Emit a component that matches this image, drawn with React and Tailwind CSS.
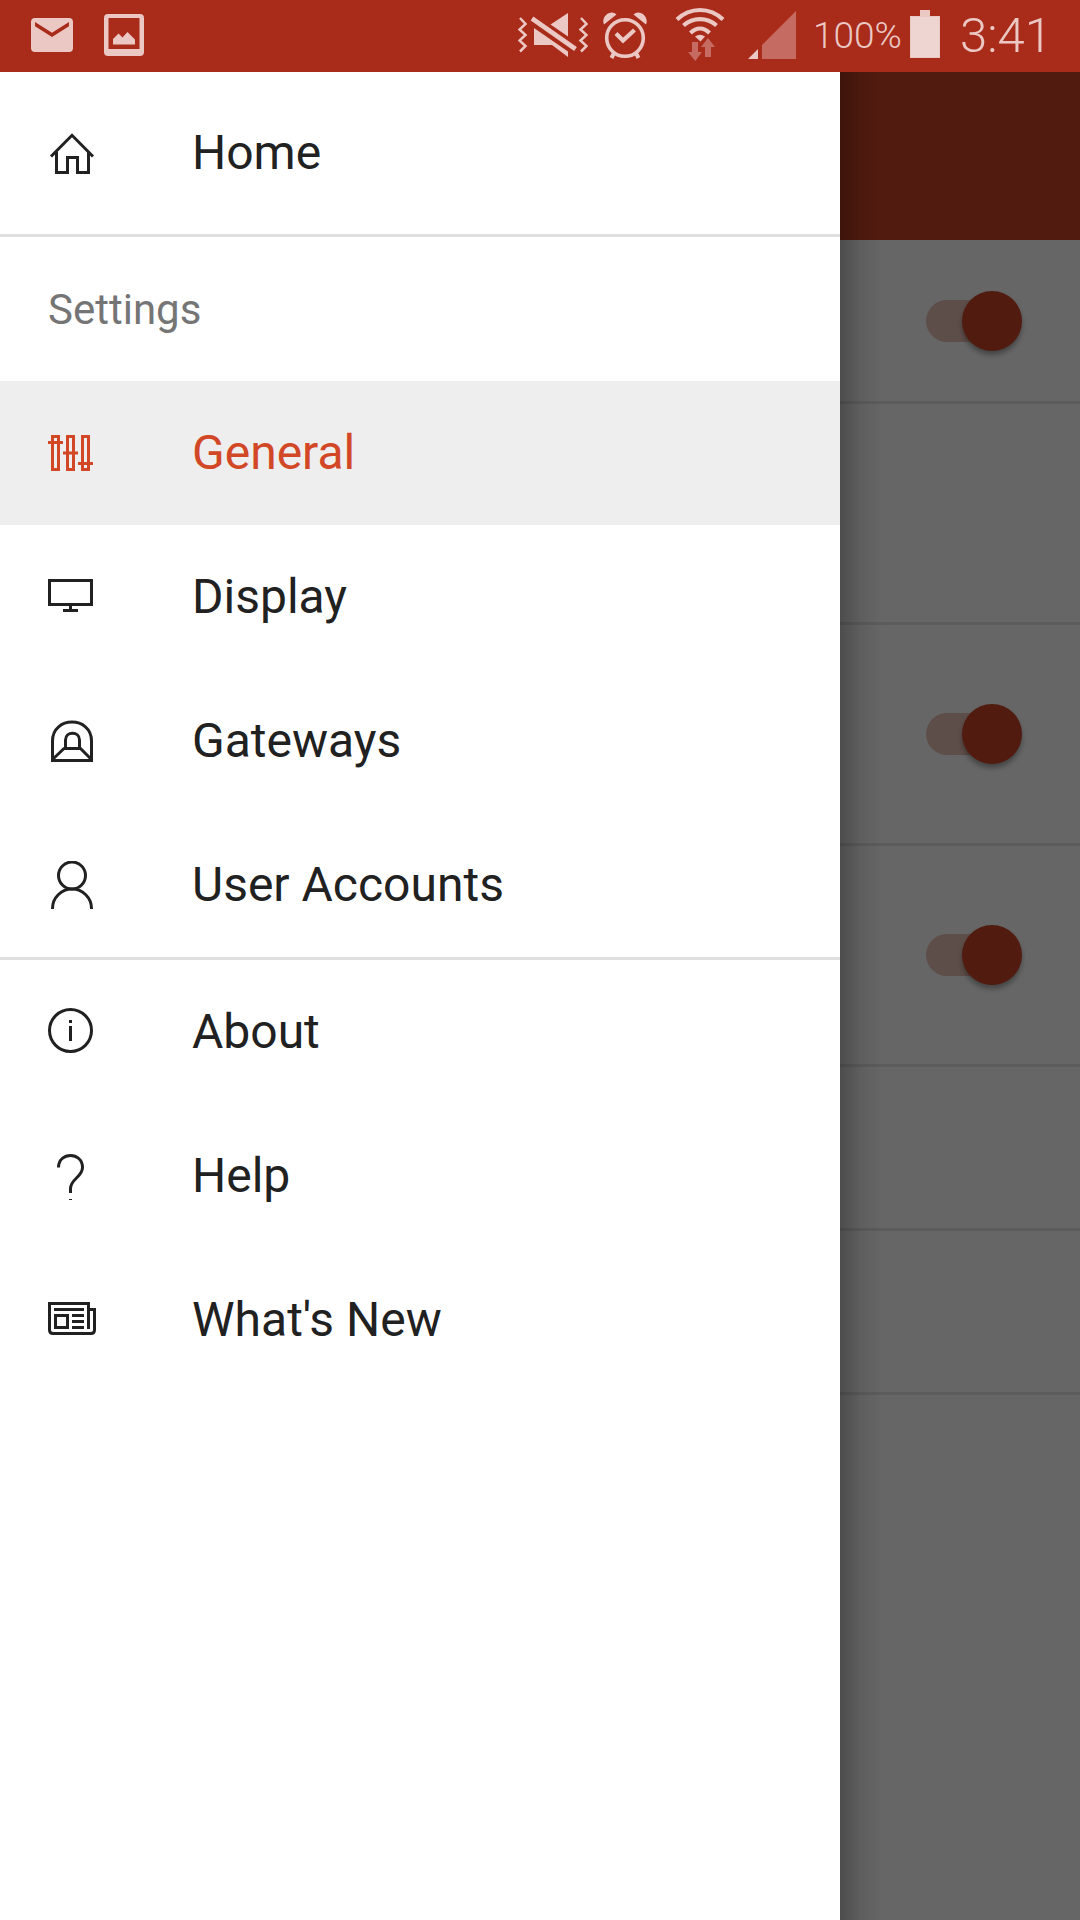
const INK = "#212121";

function MailIcon() {
  return (
    <svg width="42" height="34" viewBox="0 0 42 34" className="shrink-0">
      <path fill="#ebc8c4" fillRule="evenodd" d="M4 0H38Q42 0 42 4V30Q42 34 38 34H4Q0 34 0 30V4Q0 0 4 0ZM4 4V8.3L21 19L38 8.3V4L21 14.7Z" />
    </svg>
  );
}

function PictureIcon() {
  return (
    <svg width="40" height="42" viewBox="0 0 40 42" className="shrink-0">
      <path fill="#ebc8c4" fillRule="evenodd" d="M4 0H36Q40 0 40 4V38Q40 42 36 42H4Q0 42 0 38V4Q0 0 4 0ZM4.5 4V35H35.500V4Z" />
      <path fill="#ebc8c4" d="M9 30.500V25L14.500 19.500L18.500 23.500L23.500 18L31 25.500V30.500Z" />
    </svg>
  );
}

function MuteIcon() {
  return (
    <svg width="70" height="44" viewBox="518 13 70 44" className="shrink-0">
      <g fill="none" stroke="#ebc8c4" strokeWidth="2.5">
        <path d="M520 18L525.500 24L519.500 29.500L525.500 35L519.500 40.500L525.500 46L520 51.500" />
        <path d="M581 18L586.500 24L580.500 29.500L586.500 35L580.500 40.500L586.500 46L581 51.500" />
        <path strokeWidth="4.6" d="M532 18.500L575.500 49" />
      </g>
      <path fill="#ebc8c4" d="M568 13V36.500L550.500 24.500ZM534 28L568 51.500V57L552 45H534Z" />
    </svg>
  );
}

function AlarmIcon() {
  return (
    <svg width="46" height="48" viewBox="602 12 46 48" className="shrink-0">
      <g fill="none" stroke="#ebc8c4">
        <circle cx="625" cy="38" r="18.300" strokeWidth="3.6" />
        <path strokeWidth="4.2" d="M616 33.500L623 40.500L634.500 30" />
        <path strokeWidth="4" d="M614 53L611.500 58M636 53L638.500 58" />
      </g>
      <path fill="#ebc8c4" d="M604 24.500C601.500 19 606 12.500 612 12.500Q614.500 12.500 616.500 14.500ZM646 24.500C648.500 19 644 12.500 638 12.500Q635.500 12.500 633.500 14.500Z" />
    </svg>
  );
}

function WifiIcon() {
  return (
    <svg width="50" height="54" viewBox="675 7 50 54" className="shrink-0">
      <g fill="none" stroke="#ebc8c4" strokeWidth="4.200">
        <path d="M677 19.500C690 6.800 710 6.800 723 19.500" />
        <path d="M683.500 25.500C693 17 707 17 716.500 25.500" />
        <path d="M690.500 33C696.500 27.200 703.500 27.200 709.500 33" />
      </g>
      <path fill="#ebc8c4" d="M695 36.500Q700 33 705 36.500L700.500 41.500Z" />
      <path fill="#c66b61" d="M692 42H698V52H702L695.300 61L688 52H692ZM705 57V47H701L708 38L715 47H711V57Z" />
    </svg>
  );
}

function SignalIcon() {
  return (
    <svg width="48" height="48" viewBox="748 11 48 48" className="shrink-0">
      <path fill="#ebc8c4" d="M758 49V59H748Z" />
      <path fill="#c66b61" d="M762 45L796 11V59H762Z" />
    </svg>
  );
}

function BatteryIcon() {
  return (
    <svg width="30" height="48" viewBox="0 0 30 48" className="shrink-0">
      <path fill="#ebc8c4" d="M10 0H20V6H30V48H0V6H10Z" />
      <path fill="#efd5d2" d="M1 7H29V47H1Z" />
    </svg>
  );
}

/* Drawer glyphs share a 48px box that starts 48px from the left edge and 48px below the row top. */
function Glyph({ children, color = INK }) {
  return (
    <svg width="48" height="48" viewBox="0 0 48 48" fill="none" stroke={color} strokeWidth="3" className="shrink-0">
      {children}
    </svg>
  );
}

const HomeGlyph = () => (
  <Glyph>
    <path d="M3 27.500L24 6.300L45 27.500" />
    <path d="M8.500 23V43.500H19.500V28.500H29.500V43.500H40.500V23" />
  </Glyph>
);
const SlidersGlyph = () => (
  <Glyph color="#d24726">
    <path d="M4.500 7.500H10.500V40.500H4.500ZM19.500 7.500H25.500V40.500H19.500ZM34.500 7.500H40.500V40.500H34.500ZM0 13.500H15M15 24H30M30 34.500H45" />
  </Glyph>
);
const DisplayGlyph = () => (
  <Glyph>
    <path d="M1.500 7.500H43.500V31.500H1.500ZM22.500 33V36M15 37.500H30" />
  </Glyph>
);
const GatewayGlyph = () => (
  <Glyph>
    <path d="M4.500 43.500V24C4.500 -1.200 43.500 -1.200 43.500 24V43.500ZM17.500 31.500V23C17.500 14 31.500 14 31.500 23V31.500ZM16.500 31L5 42M32 31L43 42" />
  </Glyph>
);
const UserGlyph = () => (
  <Glyph>
    <circle cx="24" cy="14.500" r="13.500" />
    <path d="M4.500 48V47.500A19.500 19.500 0 0 1 43.500 47.500V48" />
  </Glyph>
);
const InfoGlyph = () => (
  <Glyph>
    <circle cx="22.500" cy="22.500" r="21" />
    <path d="M22.500 12V15M22.500 18V33" />
  </Glyph>
);
const HelpGlyph = () => (
  <Glyph>
    <path d="M10.500 15.500C10.500 -0.500 34.500 -0.500 34.500 15.500C34.500 25 22.500 27 22.500 36.500V41M22.500 47V50" />
  </Glyph>
);
const NewsGlyph = () => (
  <Glyph>
    <path d="M40.500 33V7.500H1.500V34Q1.500 37.500 5 37.500H43Q46.500 37.500 46.500 34V13.500H40.500" />
    <path d="M6 13.500H36M7.500 19.500H19.500V31.500H7.500ZM24 19.500H36M24 25.500H36M24 31.500H36" />
  </Glyph>
);

function Row({ icon: Icon, label, active }) {
  return (
    <button className={"flex h-36 w-full shrink-0 items-center gap-24 pl-12 text-left text-[48px] " + (active ? "bg-[#eeeeee] text-[#d24726]" : "text-[#212121]")}>
      <Icon />
      <span className="leading-[56px]">{label}</span>
    </button>
  );
}

function Setting({ height, on }) {
  return (
    <div className={"flex items-center justify-end border-b-3 border-[#5c5c5c] pr-[58px] " + height}>
      {on && (
        <div className="relative flex h-[60px] w-[96px] items-center">
          <div className="h-[42px] w-20 rounded-full bg-[#5e4e4a]" />
          <div className="absolute right-0 top-0 size-[60px] rounded-full bg-[#521b0f] shadow-[0_4px_5px_rgba(0,0,0,0.32)]" />
        </div>
      )}
    </div>
  );
}

export default function App() {
  return (
    <div className="flex h-[1920px] w-[1080px] flex-col overflow-hidden bg-[#666666] font-['Roboto',sans-serif]">
      <header className="flex h-[72px] shrink-0 items-start bg-[#a92b1a] text-[#ebc8c4]">
        <div className="ml-[31px] mt-[18px]"><MailIcon /></div>
        <div className="ml-[31px] mt-[14px]"><PictureIcon /></div>
        <div className="ml-[374px] mt-[13px]"><MuteIcon /></div>
        <div className="ml-[14px] mt-[12px]"><AlarmIcon /></div>
        <div className="ml-[27px] mt-[7px]"><WifiIcon /></div>
        <div className="ml-[23px] mt-[11px]"><SignalIcon /></div>
        <span className="ml-[17px] mt-[15px] w-[97px] whitespace-nowrap text-[37px] font-light leading-[42px]">100%</span>
        <div className="mt-[10px]"><BatteryIcon /></div>
        <span className="ml-5 mt-[8px] whitespace-nowrap text-[49px] font-light leading-[56px]">3:41</span>
      </header>
      <div className="flex min-h-0 flex-1">
        <nav className="z-10 flex w-[840px] shrink-0 flex-col bg-white">
          <div className="border-b-3 border-[#e0e0e0] py-[9px]">
            <Row icon={HomeGlyph} label="Home" />
          </div>
          <h2 className="flex h-36 items-center pl-12 text-[42px] text-[#757575]">Settings</h2>
          <Row icon={SlidersGlyph} label="General" active />
          <Row icon={DisplayGlyph} label="Display" />
          <Row icon={GatewayGlyph} label="Gateways" />
          <Row icon={UserGlyph} label="User Accounts" />
          <hr className="border-t-3 border-[#e0e0e0]" />
          <Row icon={InfoGlyph} label="About" />
          <Row icon={HelpGlyph} label="Help" />
          <Row icon={NewsGlyph} label="What's New" />
        </nav>
        <main className="relative flex-1">
          <div className="h-[168px] bg-[#521b0f]" />
          <Setting height="h-[164px]" on />
          <Setting height="h-[221px]" />
          <Setting height="h-[221px]" on />
          <Setting height="h-[221px]" on />
          <Setting height="h-[164px]" />
          <Setting height="h-[164px]" />
          <div className="absolute inset-y-0 left-0 w-[42px] bg-linear-to-r from-black/25 via-black/8 to-transparent" />
        </main>
      </div>
    </div>
  );
}
